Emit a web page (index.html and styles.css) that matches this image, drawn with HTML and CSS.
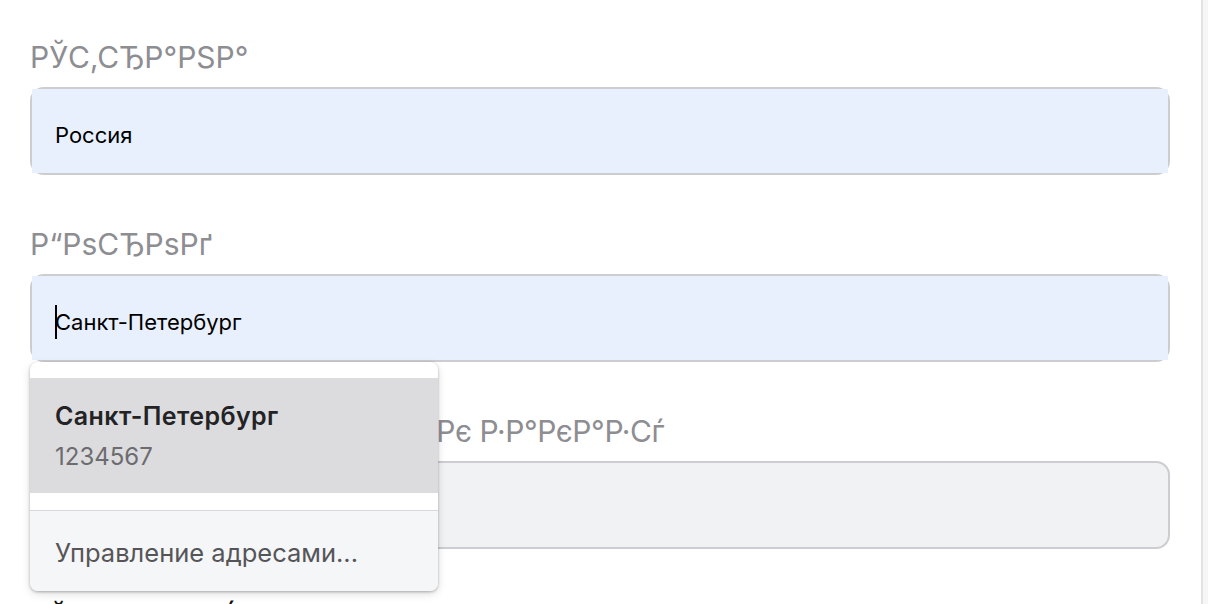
FILE: index.html
```html
<!DOCTYPE html>
<html lang="ru">
<head>
<meta charset="utf-8">
<title>Адрес доставки</title>
<link rel="stylesheet" href="styles.css">
</head>
<body>
<div class="page">
  <main class="form">
    <div class="field">
      <label class="label">РЎС‚СЂР°РЅР°</label>
      <div class="input autofill"><div class="fill">Россия</div></div>
    </div>
    <div class="field field-open">
      <label class="label">Р“РѕСЂРѕРґ</label>
      <div class="input autofill"><div class="fill"><span class="caret"></span>Санкт-Петербург</div></div>
      <div class="dropdown">
        <div class="dropdown-list">
          <div class="option option-active">
            <div class="option-title">Санкт-Петербург</div>
            <div class="option-sub">1234567</div>
          </div>
        </div>
        <div class="dropdown-footer">Управление адресами...</div>
      </div>
    </div>
    <div class="field">
      <label class="label label-tight">РљРѕРјРјРµРЅС‚Р°СЂРёР№ Рє Р·Р°РєР°Р·Сѓ</label>
      <div class="input empty"></div>
    </div>
    <div class="field field-last">
      <label class="label label-dark">РЎРѕРіР»Р°СЃРёРµ РЅР° РѕР±СЂР°Р±РѕС‚РєСѓ</label>
    </div>
  </main>
  <div class="scrollbar"></div>
</div>
</body>
</html>
```

FILE: styles.css
```css
* { box-sizing: border-box; }

html, body {
  margin: 0;
  padding: 0;
  height: 100%;
  overflow: hidden;
  background: #ffffff;
}

body {
  font-family: Inter, "Noto Sans", "Liberation Sans", sans-serif;
  color: #000;
}

.page {
  display: flex;
  height: 604px;
}

.form {
  flex: 1;
  padding: 40px 31px 0 30px;
}

.field {
  position: relative;
  margin-bottom: 52px;
}

.field-last {
  margin-top: 1px;
}

.label {
  display: block;
  font-size: 30px;
  line-height: 34px;
  color: #8d8d92;
  margin-bottom: 13px;
  white-space: nowrap;
}

.label-tight {
  letter-spacing: -0.4px;
}

.label-dark {
  color: #111;
}

.input {
  height: 88px;
  border: 2px solid #cdcdd1;
  border-radius: 14px;
}

.fill {
  height: 100%;
  background: #e8f0fe;
  display: flex;
  align-items: center;
  padding: 7px 0 0 23px;
  font-size: 22px;
  color: #000;
}

.caret {
  display: inline-block;
  width: 2px;
  height: 34px;
  background: #000;
  margin-right: -2px;
}

.input.empty {
  background: #f1f2f4;
}

.dropdown {
  position: absolute;
  left: 0;
  top: 100%;
  width: 408px;
  border-radius: 8px;
  background: #fff;
  overflow: hidden;
  box-shadow: 0 1px 3px rgba(0, 0, 0, 0.28), 0 3px 10px rgba(0, 0, 0, 0.12);
  z-index: 5;
}

.dropdown-list {
  padding: 16px 0 17px;
}

.option {
  height: 115px;
  padding: 22px 25px 0;
}

.option-active {
  background: #dcdcdf;
}

.option-title {
  font-size: 25px;
  font-weight: 600;
  letter-spacing: 0.4px;
  line-height: 32px;
  color: #232325;
}

.option-sub {
  font-size: 24px;
  line-height: 32px;
  margin-top: 9px;
  color: #6c6c70;
}

.dropdown-footer {
  height: 81px;
  border-top: 1px solid #d8d8db;
  background: #f5f6f8;
  display: flex;
  align-items: center;
  padding: 3px 0 0 25px;
  font-size: 25.5px;
  color: #555558;
}

.scrollbar {
  width: 7px;
  flex: none;
  border-left: 2px solid #e3e3e3;
  background: #f6f6f6;
}
```
